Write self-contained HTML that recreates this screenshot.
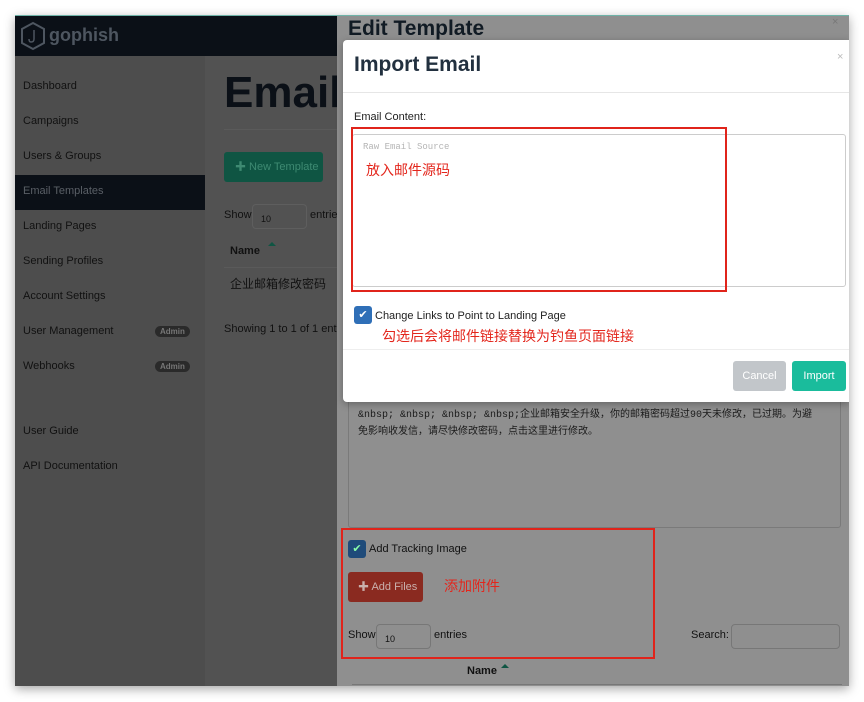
<!DOCTYPE html>
<html><head><meta charset="utf-8"><style>
*{margin:0;padding:0;box-sizing:border-box}
body{width:864px;height:702px;background:#fff;position:relative;overflow:hidden;font-family:"Liberation Sans","Noto Sans CJK SC",sans-serif;font-size:11px;color:#111}
.a{position:absolute}
.frame{left:15px;top:15px;width:834px;height:671px;background:#525252;box-shadow:0 3px 10px rgba(0,0,0,.35);overflow:hidden;border-top:1px solid #6fb3a8}
.nav{left:0;top:0;width:322px;height:40px;background:#0b1017}
.side{left:0;top:40px;width:190px;height:631px;background:#4d4d4d}
.si{left:8px;color:#111;font-size:11px}
.badge{left:140px;background:#2a2a2a;color:#777;font-size:8px;font-weight:bold;border-radius:7px;padding:1px 5px}
.cn{font-family:"Liberation Sans","Noto Sans CJK SC",sans-serif}
.red{color:#e3261c;font-size:14px}
.rbox{border:2px solid #e0241b}
.cb{width:18px;height:18px;border-radius:3px;background:#2f6fb7;color:#fff;font-size:11px;text-align:center;line-height:18px}
</style></head><body>
<div class="a frame">
 <div class="a nav"></div>
 <svg class="a" style="left:4px;top:5px" width="28" height="30" viewBox="0 0 28 30"><path d="M14 2 L25 8 L25 22 L14 28 L3 22 L3 8 Z" fill="none" stroke="#4e5660" stroke-width="2"/><path d="M15 9 V18 Q15 21 12 21 Q10 21 10 18" fill="none" stroke="#4e5660" stroke-width="1.5"/></svg>
 <div class="a" style="left:34px;top:9px;color:#4e5660;font-size:18px;font-weight:bold">gophish</div>
 <div class="a side"></div>
 <div class="a" style="left:0;top:159px;width:190px;height:35px;background:#0b1017"></div>
 <div class="a si" style="top:64px">Dashboard</div>
 <div class="a si" style="top:99px">Campaigns</div>
 <div class="a si" style="top:134px">Users &amp; Groups</div>
 <div class="a si" style="top:169px;color:#5a5f66">Email Templates</div>
 <div class="a si" style="top:204px">Landing Pages</div>
 <div class="a si" style="top:239px">Sending Profiles</div>
 <div class="a si" style="top:274px">Account Settings</div>
 <div class="a si" style="top:309px">User Management</div>
 <div class="a badge" style="top:310px">Admin</div>
 <div class="a si" style="top:344px">Webhooks</div>
 <div class="a badge" style="top:345px">Admin</div>
 <div class="a si" style="top:409px">User Guide</div>
 <div class="a si" style="top:444px">API Documentation</div>
 <div class="a" style="left:209px;top:52px;font-size:44px;font-weight:bold;color:#0b1017">Email</div>
 <div class="a" style="left:209px;top:113px;width:115px;height:1px;background:#5a5a5a"></div>
 <div class="a" style="left:209px;top:136px;width:99px;height:30px;background:#0f5543;border-radius:3px;color:#3e8a72;font-size:11px;line-height:30px;padding-left:11px">✚ New Template</div>
 <div class="a" style="left:209px;top:193px;color:#111">Show</div>
 <div class="a" style="left:237px;top:188px;width:55px;height:25px;border:1px solid #5e5e5e;border-radius:4px;font-size:9px;padding:9px 0 0 8px">10</div>
 <div class="a" style="left:295px;top:193px">entrie</div>
 <div class="a" style="left:253px;top:222px;width:0;height:0;border:4px solid transparent;border-bottom-color:#0f5543"></div>
 <div class="a" style="left:215px;top:229px;font-weight:bold">Name</div>
 <div class="a" style="left:209px;top:251px;width:115px;height:1px;background:#5a5a5a"></div>
 <div class="a cn" style="left:215px;top:259px;font-size:12px">企业邮箱修改密码</div>
 <div class="a" style="left:209px;top:307px">Showing 1 to 1 of 1 entrie</div>

 <div class="a" style="left:322px;top:0;width:512px;height:671px;background:#8f8f8f"></div>
 <div class="a" style="left:333px;top:1px;font-size:21px;font-weight:bold;color:#111b24">Edit Template</div>
 <div class="a" style="left:817px;top:0;color:#777;font-size:11px">×</div>
 <div class="a" style="left:333px;top:380px;width:493px;height:132px;border:1px solid #7a7a7a;border-radius:3px"></div>
 <div class="a cn" style="left:343px;top:374px;font-size:10px;line-height:16px;color:#1a1a1a;width:460px"><span style="font-family:'Liberation Mono',monospace">&amp;nbsp; &amp;nbsp; </span>你好<br><span style="font-family:'Liberation Mono',monospace">&amp;nbsp; &amp;nbsp; &amp;nbsp; &amp;nbsp;</span>企业邮箱安全升级，你的邮箱密码超过<span style="font-family:'Liberation Mono',monospace">90</span>天未修改，已过期。为避免影响收发信，请尽快修改密码，点击这里进行修改。</div>
 <div class="a cb" style="left:333px;top:524px;background:#1f4b7a;color:#8fa">✔</div>
 <div class="a" style="left:354px;top:527px;color:#111">Add Tracking Image</div>
 <div class="a" style="left:333px;top:556px;width:75px;height:30px;background:#8a2a20;border-radius:3px;color:#c9b0ac;line-height:30px;padding-left:10px">✚ Add Files</div>
 <div class="a red cn" style="left:429px;top:560px">添加附件</div>
 <div class="a" style="left:333px;top:613px">Show</div>
 <div class="a" style="left:361px;top:608px;width:55px;height:25px;border:1px solid #777;border-radius:4px;font-size:9px;padding:9px 0 0 8px">10</div>
 <div class="a" style="left:419px;top:613px">entries</div>
 <div class="a" style="left:676px;top:613px">Search:</div>
 <div class="a" style="left:716px;top:608px;width:109px;height:25px;border:1px solid #777;border-radius:4px"></div>
 <div class="a rbox" style="left:326px;top:512px;width:314px;height:131px"></div>
 <div class="a" style="left:486px;top:644px;width:0;height:0;border:4px solid transparent;border-bottom-color:#0f5543"></div>
 <div class="a" style="left:452px;top:649px;font-weight:bold;font-size:11px">Name</div>
 <div class="a" style="left:337px;top:668px;width:490px;height:1px;background:#777"></div>

 <div class="a" style="left:328px;top:24px;width:506px;height:362px;background:#fff;border-radius:4px 0 0 4px;box-shadow:0 2px 8px rgba(0,0,0,.3)">
  <div class="a" style="left:11px;top:13px;font-size:21px;font-weight:bold;color:#22303f">Import Email</div>
  <div class="a" style="left:494px;top:11px;color:#bbb;font-size:11px">×</div>
  <div class="a" style="left:0;top:52px;width:506px;height:1px;background:#e6e6e6"></div>
  <div class="a" style="left:11px;top:71px;color:#222">Email Content:</div>
  <div class="a" style="left:9px;top:94px;width:494px;height:153px;border:1px solid #ccc;border-radius:3px"></div>
  <div class="a" style="left:20px;top:102px;font-family:'Liberation Mono',monospace;font-size:9px;color:#b5b5b5">Raw Email Source</div>
  <div class="a rbox" style="left:8px;top:87px;width:376px;height:165px"></div>
  <div class="a red cn" style="left:23px;top:120px">放入邮件源码</div>
  <div class="a cb" style="left:11px;top:266px">✔</div>
  <div class="a" style="left:32px;top:270px;color:#222">Change Links to Point to Landing Page</div>
  <div class="a red cn" style="left:39px;top:286px">勾选后会将邮件链接替换为钓鱼页面链接</div>
  <div class="a" style="left:0;top:309px;width:506px;height:1px;background:#eee"></div>
  <div class="a" style="left:390px;top:321px;width:53px;height:30px;background:#c2c6ca;border-radius:3px;color:#fff;text-align:center;line-height:30px">Cancel</div>
  <div class="a" style="left:449px;top:321px;width:54px;height:30px;background:#1abc9c;border-radius:3px;color:#fff;text-align:center;line-height:30px">Import</div>
 </div>
</div>
</body></html>
